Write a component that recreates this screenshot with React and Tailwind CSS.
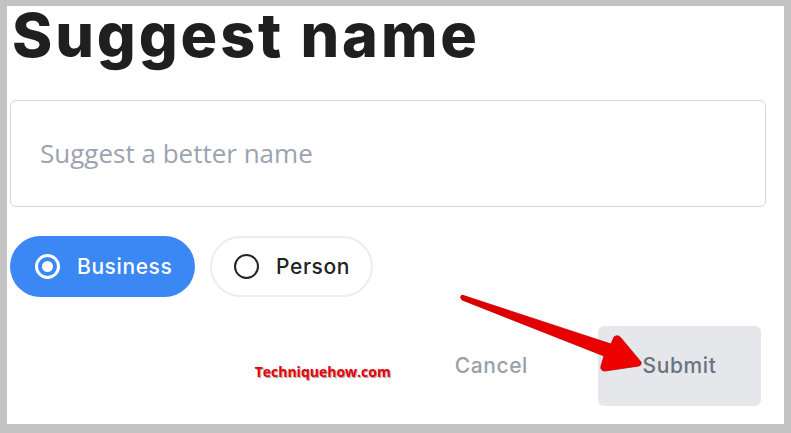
import React from "react";

const mont = { fontFamily: "Inter, 'Liberation Sans', sans-serif" };

export default function App() {
  return (
    <div className="w-[791px] h-[433px] bg-[#c3c3c3] pt-[6px] pl-[7px] pr-[7px] pb-[9px]">
      <div className="relative w-full h-full bg-white pl-[3px] pr-[18px] flex flex-col">
        <h1
          className="text-[61px] leading-[62px] font-extrabold text-[#1f1f1f] tracking-[2.9px] pl-[2px] mt-[-2px]"
          style={mont}
        >
          Suggest name
        </h1>
        <div
          className="mt-[34px] h-[107px] rounded-[6px] border border-[#d4d6db] flex items-center pl-[29px] text-[26px] text-[#9ca3af]"
          style={{ fontFamily: "'Open Sans', sans-serif" }}
        >
          Suggest a better name
        </div>
        <div className="mt-[29px] flex gap-[15px] text-[21px] font-medium tracking-[0.6px]" style={mont}>
          <div className="h-[61px] w-[185px] rounded-full bg-[#3b87f4] flex items-center pl-[25px] text-white">
            <span className="w-[25px] h-[25px] rounded-full border-[3px] border-white flex items-center justify-center">
              <span className="w-[11px] h-[11px] rounded-full bg-white" />
            </span>
            <span className="ml-[17px]">Business</span>
          </div>
          <div className="h-[61px] w-[163px] rounded-full border-2 border-[#ededed] flex items-center pl-[22px] text-[#222]">
            <span className="w-[25px] h-[25px] rounded-full border-[2.5px] border-[#222]" />
            <span className="ml-[17px]">Person</span>
          </div>
        </div>
        <div className="mt-[29px] flex items-center justify-end">
          <span
            className="text-[14px] font-bold text-[#e8000b] mr-[64px] mt-[11px]"
            style={{
              fontFamily: "'Open Sans', sans-serif",
              textShadow: "1px 1px 1px #9a9a9a",
            }}
          >
            Techniquehow.com
          </span>
          <span className="text-[21px] font-medium tracking-[0.6px] text-[#9aa0a8] mr-[70px]" style={mont}>
            Cancel
          </span>
          <div
            className="w-[163px] h-[80px] rounded-[6px] bg-[#e5e7eb] flex items-center justify-center text-[21px] font-medium tracking-[0.6px] text-[#6b7280] mr-[5px]"
            style={mont}
          >
            Submit
          </div>
        </div>
        <svg
          className="absolute left-0 top-0 pointer-events-none"
          width="784"
          height="418"
          viewBox="7 6 784 418"
        >
          <defs>
            <linearGradient id="ar" x1="0" y1="0" x2="1" y2="1">
              <stop offset="0" stopColor="#d80000" />
              <stop offset="1" stopColor="#f20000" />
            </linearGradient>
          </defs>
          <path
            d="M462 295 L611 344 L614 337 Q618 334 621 338 L641 362 Q642 365 639 366 L605 371 Q600 371 601 366 L604 356 L462 300 Q459 297 462 295 Z"
            fill="url(#ar)"
            stroke="#c40000"
            strokeWidth="0.8"
            strokeLinejoin="round"
          />
        </svg>
      </div>
    </div>
  );
}
